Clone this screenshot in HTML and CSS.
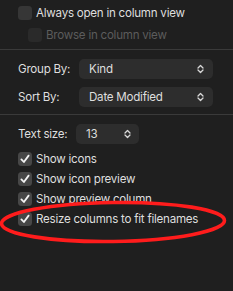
FILE: index.html
```html
<!DOCTYPE html>
<html>
<head>
<meta charset="utf-8">
<link rel="stylesheet" href="styles.css">
</head>
<body>
<div class="panel">
  <div class="section top">
    <div class="check-row">
      <span class="box"></span>
      <span class="label">Always open in column view</span>
    </div>
    <div class="check-row sub disabled">
      <span class="box"></span>
      <span class="label">Browse in column view</span>
    </div>
  </div>
  <div class="sep"></div>
  <div class="section popups">
    <div class="field-row">
      <span class="field-label">Group By:</span>
      <div class="popup wide"><span>Kind</span>
        <svg class="chev" width="7" height="10" viewBox="0 0 7 10"><path d="M1 4 L3.5 1.5 L6 4 M1 6 L3.5 8.5 L6 6" fill="none" stroke="#d8d8d8" stroke-width="1.3" stroke-linecap="round" stroke-linejoin="round"/></svg>
      </div>
    </div>
    <div class="field-row">
      <span class="field-label">Sort By:</span>
      <div class="popup wide"><span>Date Modified</span>
        <svg class="chev" width="7" height="10" viewBox="0 0 7 10"><path d="M1 4 L3.5 1.5 L6 4 M1 6 L3.5 8.5 L6 6" fill="none" stroke="#d8d8d8" stroke-width="1.3" stroke-linecap="round" stroke-linejoin="round"/></svg>
      </div>
    </div>
  </div>
  <div class="sep second"></div>
  <div class="section options">
    <div class="field-row">
      <span class="field-label short">Text size:</span>
      <div class="popup narrow"><span>13</span>
        <svg class="chev" width="7" height="10" viewBox="0 0 7 10"><path d="M1 4 L3.5 1.5 L6 4 M1 6 L3.5 8.5 L6 6" fill="none" stroke="#d8d8d8" stroke-width="1.3" stroke-linecap="round" stroke-linejoin="round"/></svg>
      </div>
    </div>
    <div class="checks">
      <div class="check-row">
        <span class="box on"><svg width="14" height="14" viewBox="0 0 14 14"><path d="M3.4 7.4 L5.9 10 L10.6 3.6" fill="none" stroke="#f2f2f2" stroke-width="1.8" stroke-linecap="round" stroke-linejoin="round"/></svg></span>
        <span class="label">Show icons</span>
      </div>
      <div class="check-row">
        <span class="box on"><svg width="14" height="14" viewBox="0 0 14 14"><path d="M3.4 7.4 L5.9 10 L10.6 3.6" fill="none" stroke="#f2f2f2" stroke-width="1.8" stroke-linecap="round" stroke-linejoin="round"/></svg></span>
        <span class="label">Show icon preview</span>
      </div>
      <div class="check-row">
        <span class="box on"><svg width="14" height="14" viewBox="0 0 14 14"><path d="M3.4 7.4 L5.9 10 L10.6 3.6" fill="none" stroke="#f2f2f2" stroke-width="1.8" stroke-linecap="round" stroke-linejoin="round"/></svg></span>
        <span class="label">Show preview column</span>
      </div>
      <div class="check-row">
        <span class="box on"><svg width="14" height="14" viewBox="0 0 14 14"><path d="M3.4 7.4 L5.9 10 L10.6 3.6" fill="none" stroke="#f2f2f2" stroke-width="1.8" stroke-linecap="round" stroke-linejoin="round"/></svg></span>
        <span class="label">Resize columns to fit filenames</span>
      </div>
    </div>
  </div>
  <svg class="annotation" width="233" height="291" viewBox="0 0 233 291">
    <ellipse cx="113" cy="222" rx="111.5" ry="19.5" fill="none" stroke="#ff1c1c" stroke-width="3.6" transform="rotate(-0.8 113 222)"/>
  </svg>
</div>
</body>
</html>
```
FILE: styles.css
```css
html, body {
  margin: 0;
  padding: 0;
  background: #1f1f1f;
}
body {
  width: 233px;
  height: 291px;
  overflow: hidden;
  font-family: Inter, "Noto Sans", "DejaVu Sans", sans-serif;
  font-size: 11.6px;
  letter-spacing: -0.25px;
  color: #dedede;
}
.panel {
  position: relative;
  width: 233px;
  height: 291px;
}
.section {
  padding-left: 18px;
  padding-right: 20px;
}
.top {
  padding-top: 6px;
  display: flex;
  flex-direction: column;
  gap: 8px;
  padding-bottom: 7px;
}
.check-row {
  display: flex;
  align-items: center;
  height: 14px;
  gap: 4px;
}
.check-row.sub {
  padding-left: 10px;
}
.box {
  width: 14px;
  height: 14px;
  border-radius: 3.5px;
  background: #363636;
  flex: none;
  display: flex;
}
.box.on {
  background: #474747;
}
.disabled .box {
  background: #2a2a2a;
}
.disabled .label {
  color: #5c5c5c;
}
.label {
  white-space: nowrap;
  line-height: 14px;
}
.sep {
  height: 1px;
  background: #3a3a3a;
}
.popups {
  padding-top: 9px;
  display: flex;
  flex-direction: column;
  gap: 8px;
  padding-bottom: 7px;
}
.field-row {
  display: flex;
  align-items: center;
}
.field-label {
  width: 61px;
  flex: none;
  white-space: nowrap;
}
.field-label.short {
  width: 58px;
}
.popup {
  height: 20px;
  border-radius: 5px;
  background: #2d2d2d;
  display: flex;
  align-items: center;
  justify-content: space-between;
  padding: 0 9px 0 10px;
  box-sizing: border-box;
}
.popup.wide {
  width: 134px;
}
.popup.narrow {
  width: 63px;
  padding-right: 8px;
}
.chev {
  flex: none;
}
.options {
  padding-top: 9px;
}
.checks {
  margin-top: 8px;
  display: flex;
  flex-direction: column;
  gap: 6px;
}
.annotation {
  position: absolute;
  left: 0;
  top: 0;
  pointer-events: none;
}
```
